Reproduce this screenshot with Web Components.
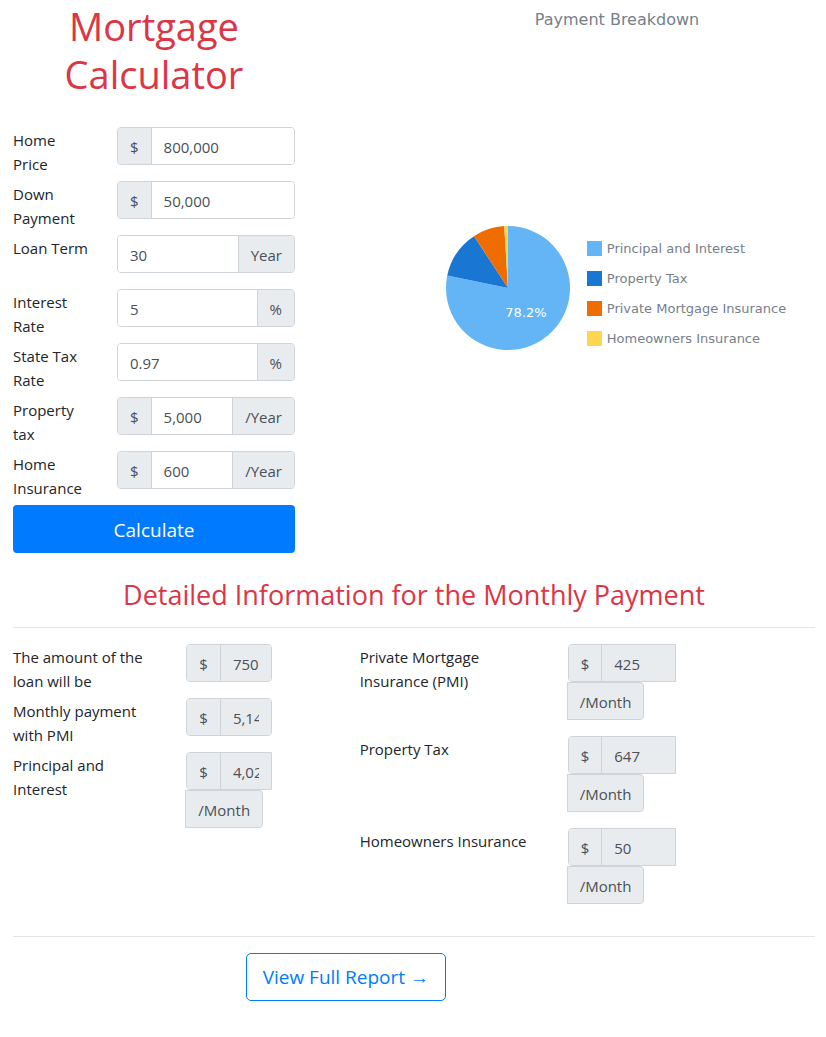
<!DOCTYPE html>
<html lang="en">
<head>
<meta charset="utf-8">
<title>Mortgage Calculator</title>
<style>
body { margin: 0; background: #fff; color: #212529; font: 15px/24px "Open Sans", "Noto Sans", sans-serif; }
</style>
</head>
<body>
<mortgage-page></mortgage-page>
<script>
const define = (name, html, init) => {
  const template = document.createElement('template');
  template.innerHTML = html;
  customElements.define(name, class extends HTMLElement {
    connectedCallback() {
      if (this.shadowRoot) return;
      this.attachShadow({ mode: 'open' }).append(template.content.cloneNode(true));
      if (init) init(this, this.shadowRoot);
    }
  });
};

/* A labelled value with an optional unit before and after it. */
define('amount-field', `
<style>
  :host { display: flex; margin-bottom: 5px; min-height: 49px; }
  * { box-sizing: border-box; }
  label { flex: none; width: var(--label-width, 33.3333%); padding: 1px 28px 0 0; }
  .group { flex: none; display: flex; flex-wrap: wrap; align-content: flex-start; width: var(--group-width, 66.6667%); padding-right: 30px; }
  .line { display: flex; width: 100%; height: 38px; border: 1px solid #ced4da; border-radius: 4px; overflow: hidden; }
  input { flex: 1; min-width: 0; width: 0; margin: 0; border: 0; padding: 7px 12px 5px; font: inherit; color: #495057; background: #fff; outline: 0; }
  input:read-only { background: #e9ecef; }
  span { background: #e9ecef; color: #495057; padding: 7px 12px 5px; white-space: nowrap; }
  .before { border-right: 1px solid #ced4da; }
  .after { border-left: 1px solid #ced4da; }
  [hidden] { display: none; }
  :host([stacked]) { margin-bottom: 16px; }
  :host([stacked]) .line { border-radius: 4px 0 0 4px; }
  :host([stacked]) .after { height: 38px; margin-left: -1px; border: 1px solid #ced4da; border-radius: 0 4px 4px 0; }
</style>
<label for="value"><slot></slot></label>
<div class="group">
  <div class="line"><span class="before"></span><input id="value" type="text"><span class="after"></span></div>
</div>`, (host, root) => {
  const input = root.querySelector('input');
  input.value = host.getAttribute('value');
  input.readOnly = host.hasAttribute('readonly');
  for (const side of ['before', 'after']) {
    const unit = root.querySelector('.' + side);
    unit.textContent = host.getAttribute(side) || '';
    unit.hidden = !host.hasAttribute(side);
  }
  if (host.hasAttribute('stacked')) root.querySelector('.group').append(root.querySelector('.after'));
});

define('calculator-form', `
<style>
  :host { display: block; }
  h1 { margin: 0; padding: 2px 0 29px; font-size: 38px; line-height: 48px; font-weight: 400; color: #dc3545; text-align: center; }
  .fields { margin-right: -30px; }
  button { display: block; width: 100%; height: 48px; padding: 2px 16px 0; border: 0; border-radius: 4px; background: #007bff; color: #fff; font: 19px/46px "Open Sans", sans-serif; cursor: pointer; }
</style>
<h1>Mortgage Calculator</h1>
<form onsubmit="return false">
  <div class="fields">
    <amount-field before="$" value="800,000">Home Price</amount-field>
    <amount-field before="$" value="50,000">Down Payment</amount-field>
    <amount-field after="Year" value="30">Loan Term</amount-field>
    <amount-field after="%" value="5">Interest Rate</amount-field>
    <amount-field after="%" value="0.97">State Tax Rate</amount-field>
    <amount-field before="$" after="/Year" value="5,000">Property tax</amount-field>
    <amount-field before="$" after="/Year" value="600">Home Insurance</amount-field>
  </div>
  <button type="submit">Calculate</button>
</form>`);

define('legend-item', `
<style>
  :host { display: flex; align-items: center; gap: 5px; height: 15px; white-space: nowrap; }
  i { width: 15px; height: 15px; background: var(--swatch); }
</style>
<i></i><slot></slot>`);

define('payment-chart', `
<style>
  :host { display: block; color: #76808a; font: 13px/15px "DejaVu Sans", sans-serif; }
  h2 { margin: 0; padding: 10px 0 196px 94px; font-size: 16px; line-height: 20px; font-weight: 400; text-align: center; }
  figure { display: flex; align-items: flex-start; justify-content: center; gap: 17px; margin: 0; padding-left: 92px; }
  svg { display: block; flex: none; }
  text { fill: #fff; font-size: 13px; }
  .legend { display: grid; gap: 15px; padding-top: 15px; }
</style>
<h2>Payment Breakdown</h2>
<figure>
  <svg width="124" height="124" viewBox="-62 -62 124 124" role="img" aria-label="Payment Breakdown"></svg>
  <div class="legend">
    <legend-item style="--swatch:#64b5f6">Principal and Interest</legend-item>
    <legend-item style="--swatch:#1976d2">Property Tax</legend-item>
    <legend-item style="--swatch:#ef6c00">Private Mortgage Insurance</legend-item>
    <legend-item style="--swatch:#ffd54f">Homeowners Insurance</legend-item>
  </div>
</figure>`, (host, root) => {
  const slices = [[4026, '#64b5f6'], [647, '#1976d2'], [425, '#ef6c00'], [50, '#ffd54f']];
  const total = slices.reduce((sum, [amount]) => sum + amount, 0);
  const point = t => `${62 * Math.sin(2 * Math.PI * t)} ${-62 * Math.cos(2 * Math.PI * t)}`;
  let start = 0, shapes = '';
  for (const [amount, color] of slices) {
    const end = start + amount / total;
    shapes += `<path fill="${color}" d="M0 0L${point(start)}A62 62 0 ${end - start > .5 ? 1 : 0} 1 ${point(end)}Z"/>`;
    start = end;
  }
  root.querySelector('svg').innerHTML = shapes + '<text x="18" y="29" text-anchor="middle">78.2%</text>';
});

define('payment-details', `
<style>
  :host { display: block; border-bottom: 1px solid #e5e5e5; }
  h2 { margin: 0; padding: 25px 0 15px; font-size: 27px; line-height: 34px; font-weight: 400; color: #dc3545; text-align: center; border-bottom: 1px solid #e5e5e5; }
  .columns { display: flex; margin-right: -30px; padding: 16px 0; }
  .loan { flex: none; width: 41.6667%; --label-width: 50%; --group-width: 33.3333%; }
  .extras { flex: none; width: 50%; --label-width: 50%; --group-width: 33.3333%; }
</style>
<h2>Detailed Information for the Monthly Payment</h2>
<div class="columns">
  <div class="loan">
    <amount-field readonly before="$" value="750,000">The amount of the loan will be</amount-field>
    <amount-field readonly before="$" value="5,148">Monthly payment with PMI</amount-field>
    <amount-field readonly stacked before="$" after="/Month" value="4,026">Principal and Interest</amount-field>
  </div>
  <div class="extras">
    <amount-field readonly stacked before="$" after="/Month" value="425">Private Mortgage Insurance (PMI)</amount-field>
    <amount-field readonly stacked before="$" after="/Month" value="647">Property Tax</amount-field>
    <amount-field readonly stacked before="$" after="/Month" value="50">Homeowners Insurance</amount-field>
  </div>
</div>`);

define('report-link', `
<style>
  :host { display: flex; justify-content: center; width: 83%; padding: 16px 0 36px; }
  a { border: 1px solid #007bff; border-radius: 5px; padding: 1px 16px 0; color: #007bff; font-size: 19px; line-height: 45px; text-decoration: none; white-space: nowrap; }
</style>
<a href="#report"><slot></slot></a>`);

define('mortgage-page', `
<style>
  :host { display: block; padding: 0 11px 0 13px; }
  .top { display: flex; gap: 30px; }
  calculator-form { flex: 282 1 0; min-width: 0; }
  payment-chart { flex: 490 1 0; min-width: 0; }
</style>
<main>
  <div class="top">
    <calculator-form></calculator-form>
    <payment-chart></payment-chart>
  </div>
  <payment-details></payment-details>
  <report-link>View Full Report →</report-link>
</main>`);
</script>
</body>
</html>
